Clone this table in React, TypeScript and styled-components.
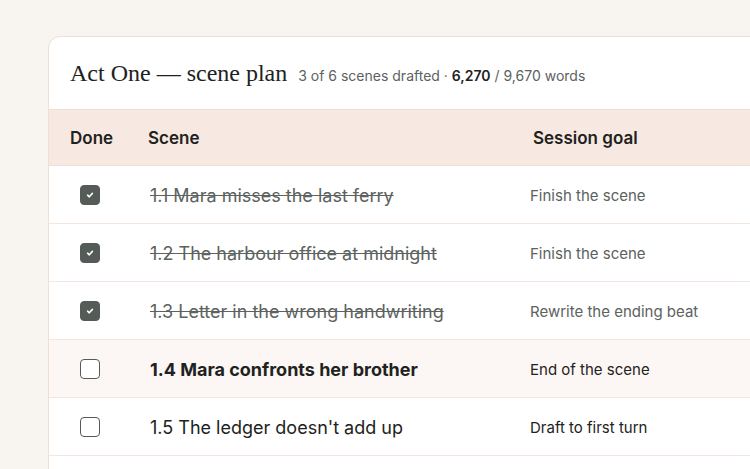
import React from "react";
import styled, { createGlobalStyle } from "styled-components";

const Global = createGlobalStyle`
  html, body { margin: 0; padding: 0; }
  body {
    background: #f8f4f0;
    font-family: Inter, "Noto Sans", sans-serif;
    overflow: hidden;
  }
`;

const Page = styled.div`
  width: 750px;
  height: 469px;
  padding: 36px 0 0 48px;
  box-sizing: border-box;
  overflow: hidden;
`;

const Card = styled.section`
  width: 740px;
  background: #ffffff;
  border: 1px solid #f0dfd4;
  border-radius: 12px;
  overflow: hidden;
`;

const Header = styled.header`
  display: flex;
  align-items: baseline;
  gap: 11px;
  height: 73px;
  box-sizing: border-box;
  padding: 23px 21px 0;
  border-bottom: 1px solid #f0dfd4;
`;

const Title = styled.h1`
  margin: 0;
  font-family: "Liberation Serif", "DejaVu Serif", serif;
  font-weight: 400;
  font-size: 24px;
  letter-spacing: 0;
  color: #1e2220;
`;

const Meta = styled.span`
  font-size: 14px;
  color: #5c625e;
  b { color: #1e2220; font-weight: 600; }
`;

const Table = styled.div`
  display: grid;
  grid-template-columns: 99px 382px 1fr;
`;

const HeadCell = styled.div<{ $pl: number }>`
  height: 56px;
  display: flex;
  align-items: center;
  padding-top: 1px;
  box-sizing: border-box;
  background: #f7e9e1;
  border-bottom: 1px solid #f0dfd4;
  font-size: 17px;
  font-weight: 600;
  color: #1e2220;
  padding-left: ${(p) => p.$pl}px;
`;

const Cell = styled.div<{ $hl?: boolean; $pl: number }>`
  height: 58px;
  box-sizing: border-box;
  display: flex;
  align-items: center;
  padding-top: 1px;
  background: ${(p) => (p.$hl ? "#fcf7f4" : "#ffffff")};
  border-bottom: 1px solid #f3e7e0;
  padding-left: ${(p) => p.$pl}px;
`;

const Box = styled.span<{ $on: boolean }>`
  width: 20px;
  height: 20px;
  border-radius: 4px;
  box-sizing: border-box;
  border: 1.5px solid #555c58;
  background: ${(p) => (p.$on ? "#555c58" : "#fff")};
  display: flex;
  align-items: center;
  justify-content: center;
`;

const SceneText = styled.span<{ $done: boolean; $current: boolean }>`
  font-size: 18px;
  color: ${(p) => (p.$done ? "#5c625e" : "#1e2220")};
  font-weight: ${(p) => (p.$current ? 700 : 400)};
  text-decoration: ${(p) => (p.$done ? "line-through" : "none")};
`;

const GoalText = styled.span<{ $done: boolean }>`
  font-size: 15px;
  color: ${(p) => (p.$done ? "#5c625e" : "#1e2220")};
`;

const Filler = styled.div`
  grid-column: 1 / -1;
  height: 40px;
`;

const rows = [
  { scene: "1.1 Mara misses the last ferry", goal: "Finish the scene", done: true },
  { scene: "1.2 The harbour office at midnight", goal: "Finish the scene", done: true },
  { scene: "1.3 Letter in the wrong handwriting", goal: "Rewrite the ending beat", done: true },
  { scene: "1.4 Mara confronts her brother", goal: "End of the scene", done: false, current: true },
  { scene: "1.5 The ledger doesn't add up", goal: "Draft to first turn", done: false },
];

const Check = () => (
  <svg width="10" height="10" viewBox="0 0 10 10">
    <path d="M2.6 5.2 L4.3 6.8 L7.4 3.4" fill="none" stroke="#fff" strokeWidth="1.6" strokeLinecap="round" strokeLinejoin="round" />
  </svg>
);

export default function App() {
  return (
    <Page>
      <Global />
      <Card>
        <Header>
          <Title>Act One — scene plan</Title>
          <Meta>
            3 of 6 scenes drafted · <b>6,270</b> / 9,670 words
          </Meta>
        </Header>
        <Table>
          <HeadCell $pl={21}>Done</HeadCell>
          <HeadCell $pl={0}>Scene</HeadCell>
          <HeadCell $pl={3}>Session goal</HeadCell>
          {rows.map((r, i) => (
            <React.Fragment key={i}>
              <Cell $hl={r.current} $pl={31}>
                <Box $on={r.done}>{r.done && <Check />}</Box>
              </Cell>
              <Cell $hl={r.current} $pl={2}>
                <SceneText $done={r.done} $current={!!r.current}>{r.scene}</SceneText>
              </Cell>
              <Cell $hl={r.current} $pl={0}>
                <GoalText $done={r.done}>{r.goal}</GoalText>
              </Cell>
            </React.Fragment>
          ))}
          <Filler />
        </Table>
      </Card>
    </Page>
  );
}
